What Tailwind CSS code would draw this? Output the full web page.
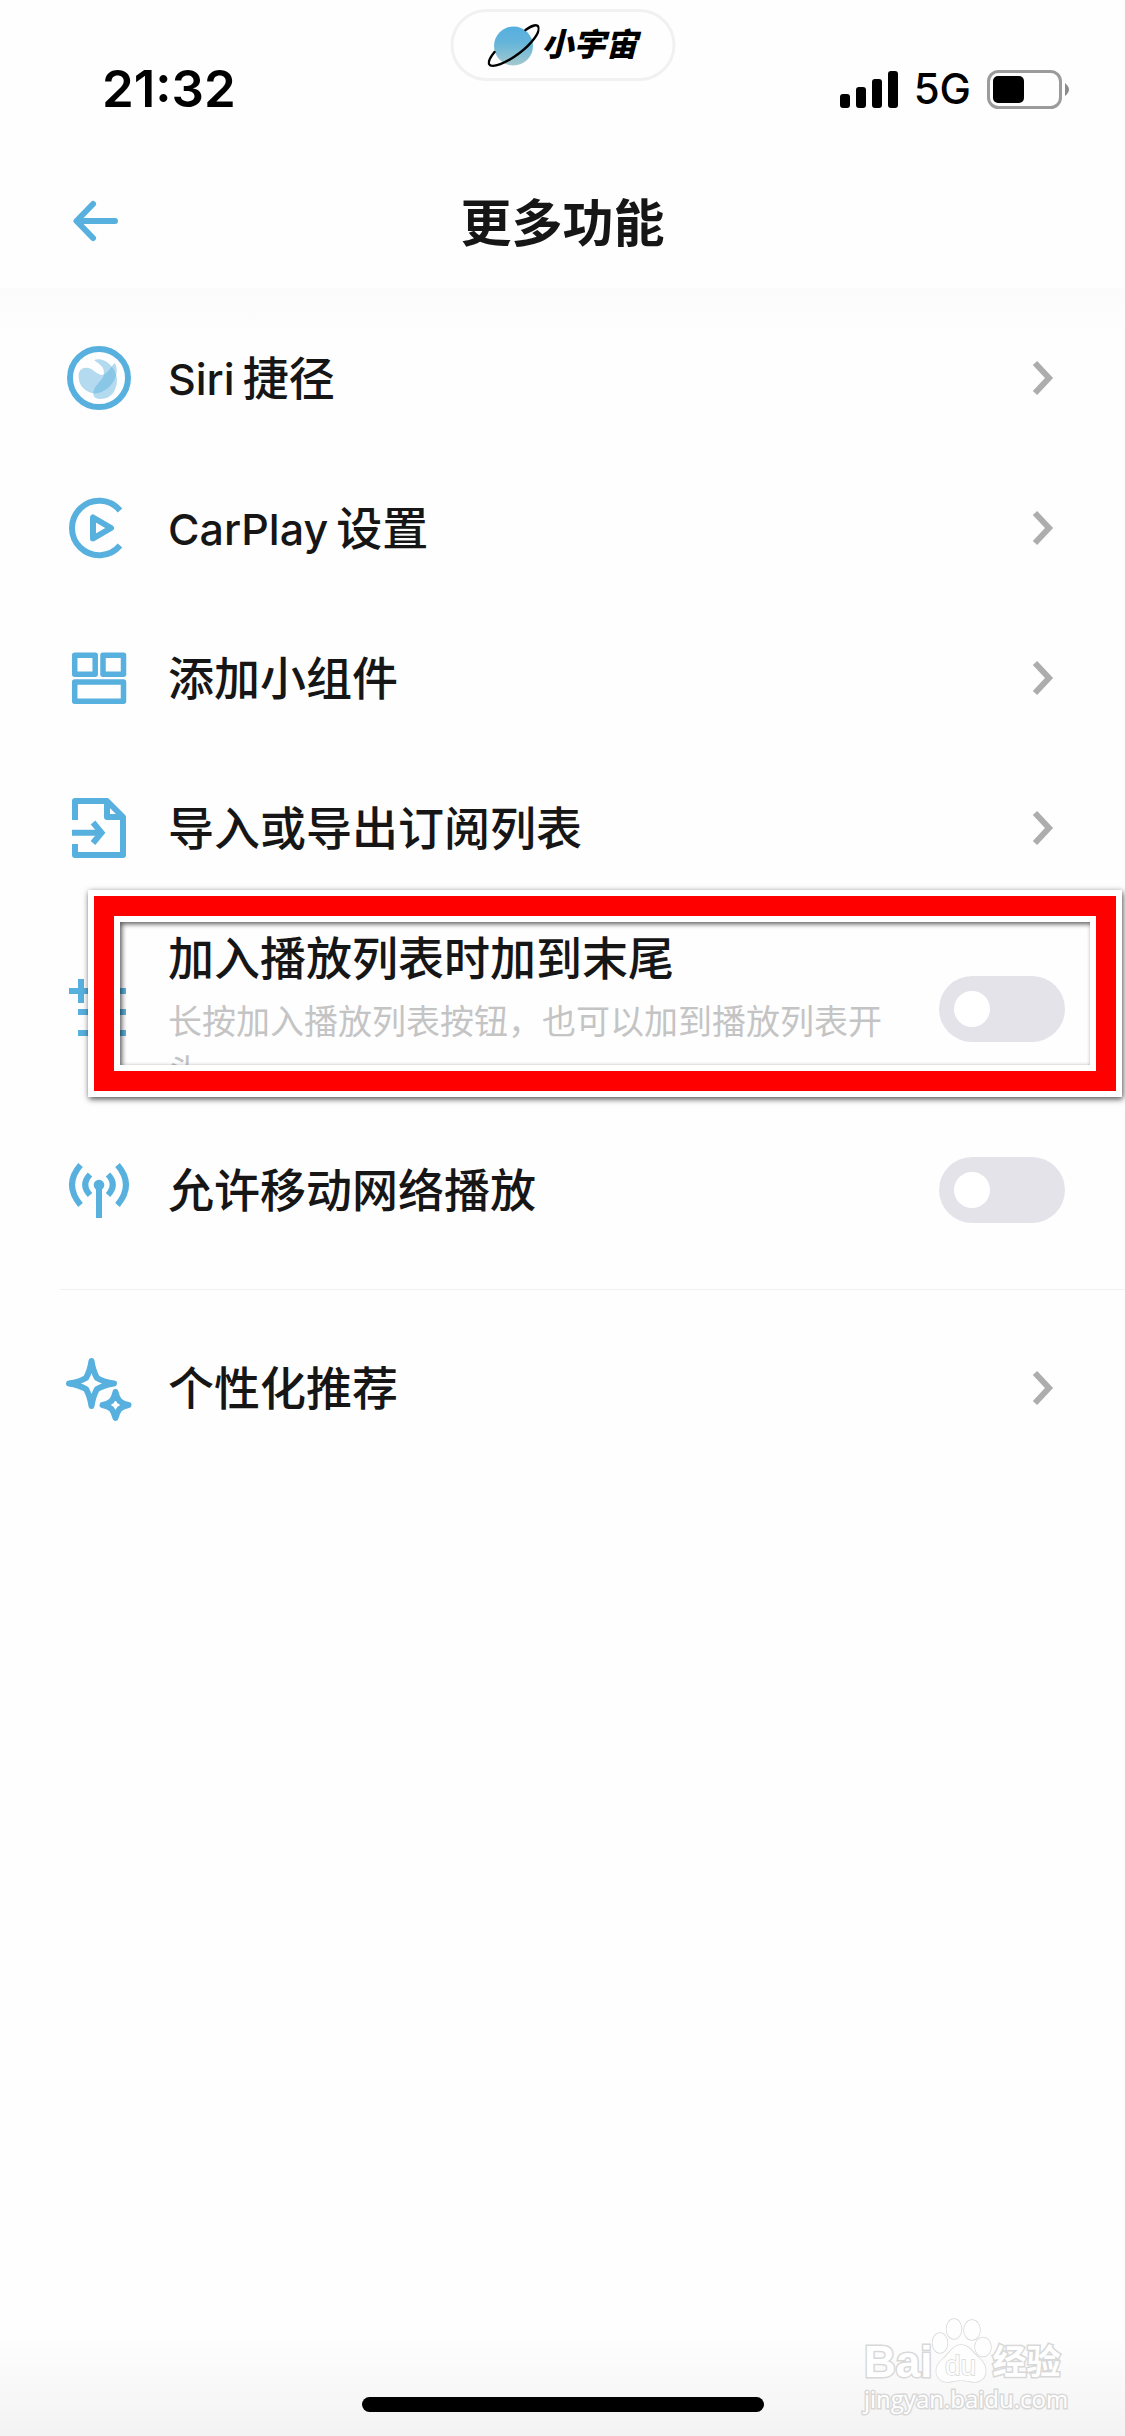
<!DOCTYPE html>
<html lang="zh-CN">
<head>
<meta charset="utf-8">
<meta name="viewport" content="width=device-width, initial-scale=1">
<title>更多功能</title>
<script src="https://cdn.jsdelivr.net/npm/@tailwindcss/browser@4"></script>
</head>
<body class="bg-[#fefefe]">
<div class="relative flex min-h-screen flex-col overflow-hidden font-['Inter','Noto_Sans_CJK_SC',sans-serif] text-[#161616]">

  <header class="bg-[#fefefe]">
    <!-- status bar -->
    <div class="relative flex h-[132px] items-start justify-between pt-[57px] pr-[55px] pl-[102px] text-black">
      <time class="text-[51px] leading-[64px] font-semibold">21:32</time>
      <div class="absolute top-[9px] left-1/2 flex h-[72px] w-[225px] -translate-x-1/2 items-center justify-center gap-[2px] rounded-full border-3 border-[#f1f1f1]">
        <svg class="size-[52px]" viewBox="0 0 52 52" fill="none" aria-hidden="true">
          <defs><linearGradient id="planet" x1="0" y1="0" x2="0" y2="1"><stop offset="0" stop-color="#55afe0"/><stop offset=".4" stop-color="#64b4da"/><stop offset="1" stop-color="#a3c9cd"/></linearGradient></defs>
          <circle cx="26" cy="27" r="19.500" fill="url(#planet)"/>
          <path d="M38 11C45 6 50 5 51 8C53 13 44 25 32 34C19 44 4 50 1.500 45C.500 42 3 38 7 33" stroke="#000" stroke-width="2.400" stroke-linecap="round"/>
        </svg>
        <span class="text-[32px] leading-10 font-black italic">小宇宙</span>
      </div>
      <div class="flex h-16 items-center gap-4">
        <svg class="h-[37px] w-[58px]" viewBox="0 0 58 37" aria-label="信号"><rect y="23" width="10" height="14" rx="3"/><rect x="16" y="16" width="10" height="21" rx="3"/><rect x="32" y="8" width="10" height="29" rx="3"/><rect x="48" width="10" height="37" rx="3"/></svg>
        <span class="text-[42px] leading-[48px] font-medium">5G</span>
        <svg class="h-[39px] w-[83px]" viewBox="0 0 83 39" aria-label="电池"><rect x="1.500" y="1.500" width="72" height="36" rx="10" fill="none" stroke="#9b9b9b" stroke-width="3"/><rect x="6" y="6" width="31" height="27" rx="5"/><path d="M78 13Q86 19.500 78 26Z" fill="#8c8c8c"/></svg>
      </div>
    </div>
    <!-- navigation bar -->
    <div class="grid h-[156px] grid-cols-[1fr_auto_1fr] items-start px-[66px] pt-[58px]">
      <button type="button" aria-label="返回" class="flex h-[62px] w-[60px] items-center pl-[6px]">
        <svg class="size-12" viewBox="0 0 48 48" fill="none" stroke="#58b0de" stroke-width="6" stroke-linecap="round" stroke-linejoin="round"><path d="M21 7L4.500 24L21 41M5 24H43"/></svg>
      </button>
      <h1 class="text-[51px] leading-[68px] font-bold">更多功能</h1>
    </div>
  </header>

  <main class="flex-1 bg-linear-to-b from-[#fbfbfb] to-[#fefefe] to-[48px] pt-[15px]">
    <a href="#siri" class="flex h-[150px] items-center gap-9 pr-[60px] pl-[66px]">
      <svg class="size-[66px] shrink-0" viewBox="0 0 66 66" fill="none" aria-hidden="true"><circle cx="33" cy="33" r="29" stroke="#58b0de" stroke-width="6"/><path d="M12.700 32C12 25 17 22 22 23C28 24 31 30 36 30C42 29 44 22 49 18C53 26 50 36 42 43C35 49 27 50 21 46C15 42 13 38 12.700 32Z" fill="#58b0de" fill-opacity=".45"/><path d="M28 15C38 11 50 22 51 34C51 45 46 54 34 54C28 54 26 50 28 45C30 38 38 35 38 28C38 20 31 18 28 15Z" fill="#58b0de" fill-opacity=".45"/></svg>
      <span class="flex flex-1 items-baseline gap-2 text-[46px] leading-[62px] font-medium"><span class="text-[43px]">Siri</span>捷径</span>
      <svg class="size-9 shrink-0" viewBox="0 0 36 36" fill="none" stroke="#adadae" stroke-width="6" aria-hidden="true"><path d="M6 3L20 18L6 33"/></svg>
    </a>
    <a href="#carplay" class="flex h-[150px] items-center gap-9 pr-[60px] pl-[66px]">
      <svg class="size-[66px] shrink-0" viewBox="0 0 66 66" fill="none" stroke="#58b0de" stroke-width="6" aria-hidden="true"><path d="M54 15.500A27.200 27.200 0 1 0 54 50.500"/><path d="M27 22.500V43.500L45 33Z" stroke-linejoin="round"/></svg>
      <span class="flex flex-1 items-baseline gap-2 text-[46px] leading-[62px] font-medium"><span class="text-[43px]">CarPlay</span>设置</span>
      <svg class="size-9 shrink-0" viewBox="0 0 36 36" fill="none" stroke="#adadae" stroke-width="6" aria-hidden="true"><path d="M6 3L20 18L6 33"/></svg>
    </a>
    <a href="#widgets" class="flex h-[150px] items-center gap-9 pr-[60px] pl-[66px]">
      <svg class="size-[66px] shrink-0" viewBox="0 0 66 66" fill="none" stroke="#58b0de" stroke-width="5.500" stroke-linejoin="round" aria-hidden="true"><rect x="8.700" y="10.200" width="20.500" height="19"/><rect x="37" y="10.200" width="20.500" height="19"/><rect x="8.700" y="37" width="48.800" height="19.200"/></svg>
      <span class="flex-1 text-[46px] leading-[62px] font-medium">添加小组件</span>
      <svg class="size-9 shrink-0" viewBox="0 0 36 36" fill="none" stroke="#adadae" stroke-width="6" aria-hidden="true"><path d="M6 3L20 18L6 33"/></svg>
    </a>
    <a href="#subscriptions" class="flex h-[150px] items-center gap-9 pr-[60px] pl-[66px]">
      <svg class="size-[66px] shrink-0" viewBox="0 0 66 66" fill="none" stroke="#58b0de" stroke-width="6" stroke-linejoin="round" aria-hidden="true"><path d="M9 25V6H41L57 22V60H9V49M41 6V22H57M6 37.700H35"/><path d="M27 27.500L35.500 37.700L27 48" stroke-linejoin="miter"/></svg>
      <span class="flex-1 text-[46px] leading-[62px] font-medium">导入或导出订阅列表</span>
      <svg class="size-9 shrink-0" viewBox="0 0 36 36" fill="none" stroke="#adadae" stroke-width="6" aria-hidden="true"><path d="M6 3L20 18L6 33"/></svg>
    </a>
    <div class="relative">
      <label class="flex items-center gap-9 py-6 pr-[60px] pl-[66px]">
        <svg class="size-[66px] shrink-0" viewBox="0 0 66 66" fill="none" stroke="#58b0de" stroke-width="6" aria-hidden="true"><path d="M3 15H27M15 3V27M34 15H60M12 36H60M12 57H60"/></svg>
        <span class="-mb-[6px] flex flex-1 flex-col gap-2">
          <span class="text-[46px] leading-[62px] font-medium">加入播放列表时加到末尾</span>
          <span class="text-[34px] leading-[50px] text-[#c4c4c5]">长按加入播放列表按钮，也可以加到播放列表开头</span>
        </span>
        <input type="checkbox" role="switch" class="h-[66px] w-[126px] shrink-0 appearance-none rounded-full bg-[#e4e3e9] pt-[15px] pl-[15px] before:block before:size-9 before:rounded-full before:bg-white">
      </label>
      <!-- highlight frame -->
      <div class="pointer-events-none absolute -top-[13px] right-[3px] bottom-[18px] left-[88px] border-6 border-white shadow-[1px_2px_6px_rgba(0,0,0,0.7)]">
        <div class="h-full border-20 border-[#ff0000]">
          <div class="h-full border-6 border-white shadow-[inset_2px_2px_5px_rgba(0,0,0,0.65)]"></div>
        </div>
      </div>
    </div>
    <label class="flex h-[150px] items-center gap-9 pr-[60px] pl-[66px]">
      <svg class="size-[66px] shrink-0" viewBox="0 0 66 66" fill="none" stroke="#58b0de" stroke-width="6" aria-hidden="true"><path d="M14.500 8Q-2.500 27.700 14.500 48M51.500 8Q68.500 27.700 51.500 48M24 17.500Q14.500 27.700 24 38M42 17.500Q51.500 27.700 42 38M33 28V61"/><circle cx="33" cy="28" r="5.300" fill="#58b0de" stroke="none"/></svg>
      <span class="flex-1 text-[46px] leading-[62px] font-medium">允许移动网络播放</span>
      <input type="checkbox" role="switch" class="h-[66px] w-[126px] shrink-0 appearance-none rounded-full bg-[#e4e3e9] pt-[15px] pl-[15px] before:block before:size-9 before:rounded-full before:bg-white">
    </label>
    <hr class="mt-6 mb-[23px] ml-[60px] border-t border-[#f1f1f2]">
    <a href="#personalized" class="flex h-[150px] items-center gap-9 pr-[60px] pl-[66px]">
      <svg class="size-[66px] shrink-0 overflow-visible" viewBox="0 0 66 66" fill="none" stroke="#58b0de" stroke-width="6" stroke-linejoin="round" aria-hidden="true"><path d="M25.500 6Q27 16 31 23Q38 27 48 28.500Q38 30 31 34Q27 41 25.500 51Q24 41 20 34Q13 30 3 28.500Q13 27 20 23Q24 16 25.500 6Z"/><path d="M49.500 37Q50.500 42 53.500 46Q57 49 62.500 50Q57 51 53.500 54Q50.500 58 49.500 63Q48.500 58 45.500 54Q42 51 36.500 50Q42 49 45.500 46Q48.500 42 49.500 37Z"/></svg>
      <span class="flex-1 text-[46px] leading-[62px] font-medium">个性化推荐</span>
      <svg class="size-9 shrink-0" viewBox="0 0 36 36" fill="none" stroke="#adadae" stroke-width="6" aria-hidden="true"><path d="M6 3L20 18L6 33"/></svg>
    </a>
  </main>

  <footer class="flex h-[100px] items-end justify-center bg-linear-to-b from-[#fefefe] to-[#f3f3f3] pb-6">
    <div class="h-[15px] w-[402px] rounded-full bg-black"></div>
  </footer>

  <!-- watermark -->
  <div class="pointer-events-none absolute right-[57px] bottom-[22px] w-[204px] text-white [paint-order:stroke] [-webkit-text-stroke:3px_#d8d8d8]">
    <div class="flex h-[68px] items-end">
      <span class="font-['Liberation_Sans',sans-serif] text-[44px] leading-[44px] font-bold">Bai</span>
      <svg class="h-[68px] w-[60px] shrink-0" viewBox="0 0 60 68" fill="#fefefe" stroke="#d8d8d8" stroke-width="1.500" aria-hidden="true"><ellipse cx="8" cy="27" rx="7.500" ry="10"/><ellipse cx="22" cy="13" rx="7.500" ry="10"/><ellipse cx="40" cy="14" rx="8" ry="10"/><ellipse cx="51" cy="31" rx="8" ry="9.500"/><path d="M29 29C37 29 40 36 47 42C58 51 55 67 41 66C34 64 24 64 17 66C3 67 0 51 11 43C18 37 21 29 29 29Z"/><text x="13" y="59" class="text-[28px]" font-family="Liberation Sans, sans-serif">du</text></svg>
      <span class="text-[34px] leading-[44px] font-bold">经验</span>
    </div>
    <div class="font-['Open_Sans',sans-serif] text-[24px] leading-[30px]">jingyan.baidu.com</div>
  </div>
</div>
</body>
</html>
